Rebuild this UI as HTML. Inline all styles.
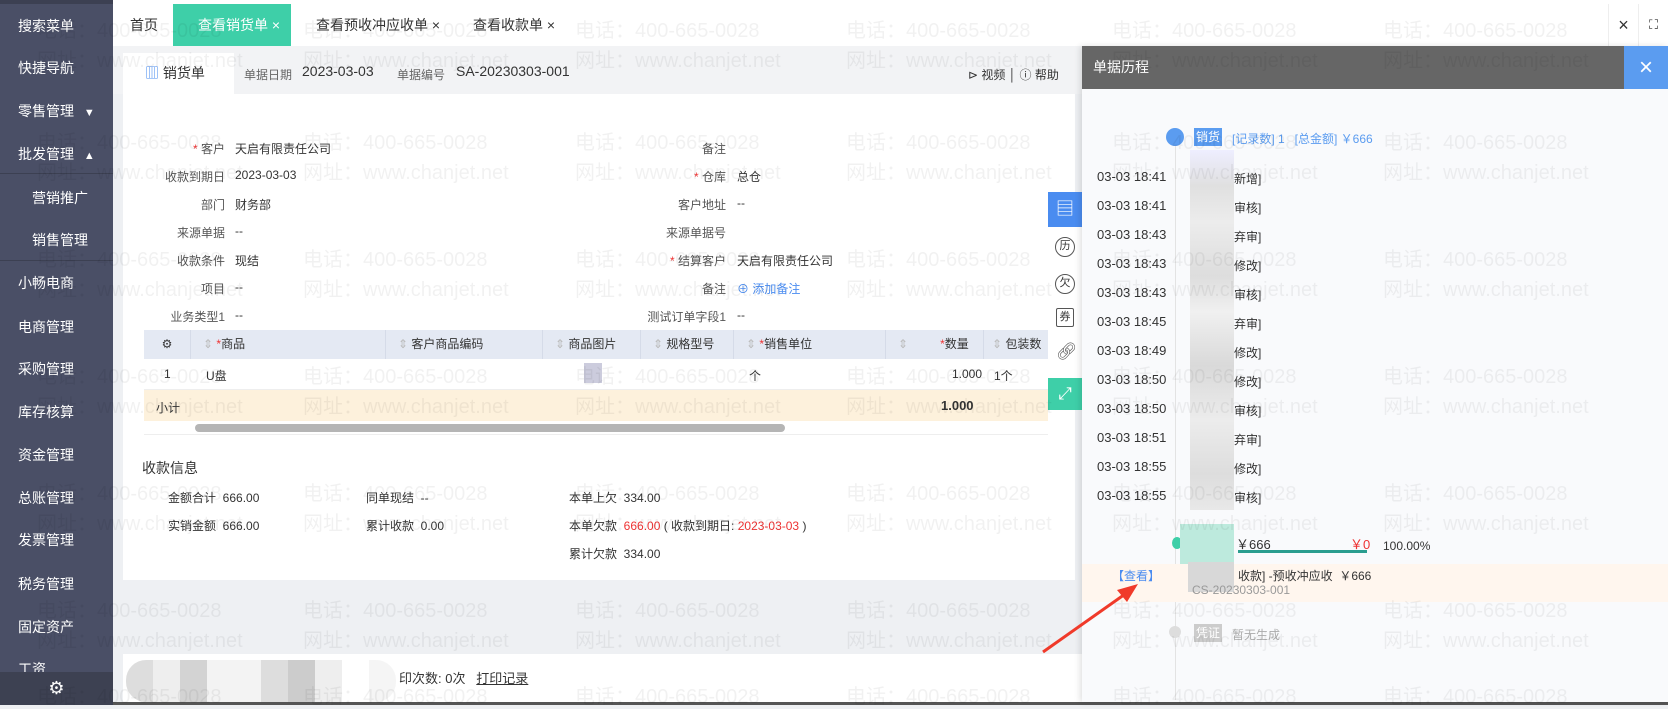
<!DOCTYPE html>
<html><head><meta charset="utf-8"><style>
*{margin:0;padding:0;box-sizing:border-box}
body{width:1668px;height:705px;overflow:hidden;position:relative;background:#eef0f3;font-family:"Liberation Sans","Noto Sans CJK SC",sans-serif;font-size:12px;color:#333}
.a{position:absolute;white-space:nowrap}
#side{left:0;top:0;width:113px;height:705px;background:#4a4f66}
#side .it{position:absolute;left:18px;color:#fff;font-size:14px}
#side .sub{left:32px}
.lbl{color:#555;text-align:right;width:120px}
.wm{position:absolute;color:rgba(0,0,0,0.055);font-size:20px;white-space:nowrap;pointer-events:none;z-index:50;font-family:"Liberation Sans Narrow","Liberation Sans","Noto Sans CJK SC",sans-serif}
.th{position:absolute;top:0;height:29px;line-height:29px;border-right:1px solid #d5dbe8;font-size:12px;color:#333}
.blur{position:absolute;background:#ddd}
.t{position:absolute;left:1097px;font-size:13px;color:#333}
</style></head><body>
<div id="side" class="a">
<div style="position:absolute;top:0;left:0;width:113px;height:4px;background:#3c4052"></div>
<div class="it" style="top:16px">搜索菜单</div>
<div class="it" style="top:58px">快捷导航</div>
<div class="it" style="top:101px">零售管理 <span style="font-size:11px;margin-left:6px">▼</span></div>
<div class="it" style="top:144px">批发管理 <span style="font-size:11px;margin-left:6px">▲</span></div>
<div style="position:absolute;top:173px;left:0;width:113px;height:1px;background:#3c4052"></div>
<div class="it sub" style="top:188px">营销推广</div>
<div class="it sub" style="top:230px">销售管理</div>
<div style="position:absolute;top:260px;left:0;width:113px;height:1px;background:#3c4052"></div>
<div class="it" style="top:273px">小畅电商</div>
<div class="it" style="top:317px">电商管理</div>
<div class="it" style="top:359px">采购管理</div>
<div class="it" style="top:402px">库存核算</div>
<div class="it" style="top:445px">资金管理</div>
<div class="it" style="top:488px">总账管理</div>
<div class="it" style="top:530px">发票管理</div>
<div class="it" style="top:574px">税务管理</div>
<div class="it" style="top:617px">固定资产</div>
<div class="it" style="top:659px">工资</div>
<div style="position:absolute;top:672px;left:0;width:113px;height:33px;background:#3d4152;color:#fff;text-align:center;font-size:18px;line-height:33px">⚙</div>
</div>
<div class="a" style="left:113px;top:0;width:1555px;height:46px;background:#fff"></div>
<div class="a" style="left:130px;top:15px;font-size:14px">首页</div>
<div class="a" style="left:173px;top:4px;width:118px;height:42px;background:#3ecfa8;color:#fff;font-size:14px;line-height:42px;padding-left:25px">查看销货单 ×</div>
<div class="a" style="left:316px;top:15px;font-size:14px">查看预收冲应收单 ×</div>
<div class="a" style="left:473px;top:15px;font-size:14px">查看收款单 ×</div>
<div class="a" style="left:1608px;top:4px;width:30px;height:42px;background:#fff;border-left:1px solid #eee;font-size:18px;text-align:center;line-height:42px">×</div>
<div class="a" style="left:1638px;top:4px;width:30px;height:42px;background:#fff;border-left:1px solid #eee;font-size:13px;text-align:center;line-height:42px">⛶</div>
<div class="a" style="left:113px;top:46px;width:970px;height:48px;background:#f2f3f5"></div>
<div class="a" style="left:123px;top:53px;width:111px;height:41px;background:#fff;font-size:14px;line-height:41px;padding-left:22px"><span style="color:#4a8cf0">▥</span> 销货单</div>
<div class="a" style="left:244px;top:66px;color:#666">单据日期</div>
<div class="a" style="left:302px;top:63px;font-size:14px">2023-03-03</div>
<div class="a" style="left:397px;top:66px;color:#666">单据编号</div>
<div class="a" style="left:456px;top:63px;font-size:14px">SA-20230303-001</div>
<div class="a" style="left:968px;top:66px;font-size:12px">⊳ 视频 │ ⓘ 帮助</div>
<div class="a" style="left:123px;top:94px;width:952px;height:486px;background:#fff"></div>
<div class="a lbl" style="left:105px;top:140px"><span style="color:#e33">* </span>客户</div><div class="a" style="left:235px;top:140px">天启有限责任公司</div>
<div class="a lbl" style="left:105px;top:168px">收款到期日</div><div class="a" style="left:235px;top:168px">2023-03-03</div>
<div class="a lbl" style="left:105px;top:196px">部门</div><div class="a" style="left:235px;top:196px">财务部</div>
<div class="a lbl" style="left:105px;top:224px">来源单据</div><div class="a" style="left:235px;top:224px">--</div>
<div class="a lbl" style="left:105px;top:252px">收款条件</div><div class="a" style="left:235px;top:252px">现结</div>
<div class="a lbl" style="left:105px;top:280px">项目</div><div class="a" style="left:235px;top:280px">--</div>
<div class="a lbl" style="left:105px;top:308px">业务类型1</div><div class="a" style="left:235px;top:308px">--</div>
<div class="a lbl" style="left:606px;top:140px">备注</div>
<div class="a lbl" style="left:606px;top:168px"><span style="color:#e33">* </span>仓库</div><div class="a" style="left:737px;top:168px">总仓</div>
<div class="a lbl" style="left:606px;top:196px">客户地址</div><div class="a" style="left:737px;top:196px">--</div>
<div class="a lbl" style="left:606px;top:224px">来源单据号</div>
<div class="a lbl" style="left:606px;top:252px"><span style="color:#e33">* </span>结算客户</div><div class="a" style="left:737px;top:252px">天启有限责任公司</div>
<div class="a lbl" style="left:606px;top:280px">备注</div><div class="a" style="left:737px;top:280px;color:#4a8cf0">⊕ 添加备注</div>
<div class="a lbl" style="left:606px;top:308px">测试订单字段1</div><div class="a" style="left:737px;top:308px">--</div>
<div class="a" style="left:144px;top:330px;width:904px;height:29px;background:#e4e9f3">
<div class="th" style="left:0;width:47px;text-align:center">⚙</div>
<div class="th" style="left:47px;width:195px;padding-left:12px"><span style="color:#bbb">⇕</span> <span style="color:#e33">*</span>商品</div>
<div class="th" style="left:242px;width:157px;padding-left:12px"><span style="color:#bbb">⇕</span> 客户商品编码</div>
<div class="th" style="left:399px;width:98px;padding-left:12px"><span style="color:#bbb">⇕</span> 商品图片</div>
<div class="th" style="left:497px;width:93px;padding-left:12px"><span style="color:#bbb">⇕</span> 规格型号</div>
<div class="th" style="left:590px;width:152px;padding-left:12px"><span style="color:#bbb">⇕</span> <span style="color:#e33">*</span>销售单位</div>
<div class="th" style="left:742px;width:98px;padding-left:12px"><span style="color:#bbb;margin-right:32px">⇕</span><span style="color:#e33">*</span>数量</div>
<div class="th" style="left:840px;width:64px;padding-left:8px;border:none"><span style="color:#bbb">⇕</span> 包装数</div>
</div>
<div class="a" style="left:144px;top:359px;width:904px;height:31px;border-bottom:1px solid #eee">
<div class="a" style="left:20px;top:8px">1</div><div class="a" style="left:62px;top:8px">U盘</div>
<div class="a" style="left:440px;top:4px;width:18px;height:20px;background:#ccd"></div>
<div class="a" style="left:605px;top:8px">个</div><div class="a" style="left:808px;top:8px">1.000</div><div class="a" style="left:850px;top:8px">1个</div>
</div>
<div class="a" style="left:144px;top:390px;width:904px;height:31px;background:#fdf1dc"><div class="a" style="left:12px;top:9px">小计</div><div class="a" style="left:797px;top:8px;font-weight:bold;font-size:13px">1.000</div></div>
<div class="a" style="left:195px;top:424px;width:590px;height:8px;border-radius:4px;background:#b5b5b5"></div>
<div class="a" style="left:144px;top:434px;width:904px;height:1px;background:#eee"></div>
<div class="a" style="left:142px;top:458px;font-size:14px">收款信息</div>
<div class="a" style="left:168px;top:489px">金额合计 &nbsp;666.00</div>
<div class="a" style="left:168px;top:517px">实销金额 &nbsp;666.00</div>
<div class="a" style="left:366px;top:489px">同单现结 &nbsp;--</div>
<div class="a" style="left:366px;top:517px">累计收款 &nbsp;0.00</div>
<div class="a" style="left:569px;top:489px">本单上欠 &nbsp;334.00</div>
<div class="a" style="left:569px;top:517px">本单欠款 &nbsp;<span style="color:#e33">666.00</span> ( 收款到期日: <span style="color:#e33">2023-03-03</span> )</div>
<div class="a" style="left:569px;top:545px">累计欠款 &nbsp;334.00</div>
<div class="a" style="left:123px;top:654px;width:960px;height:48px;background:#fff"></div>
<div class="a" style="left:126px;top:660px;width:270px;height:42px;border-radius:20px;background:linear-gradient(90deg,#ddd 0 10%,#eee 10% 20%,#d3d3d3 20% 30%,#f3f3f3 30% 50%,#ddd 50% 60%,#ccc 60% 70%,#eee 70% 80%,#fff 80% 90%,#f5f5f5 90%)"></div>
<div class="a" style="left:399px;top:668px;font-size:13px">印次数: 0次 &nbsp;&nbsp;<span style="text-decoration:underline">打印记录</span></div>
<div class="a" style="left:113px;top:702px;width:1555px;height:3px;background:#555"></div>
<div class="a" style="left:1048px;top:192px;width:34px;height:218px;background:#fff"></div>
<div class="a" style="left:1048px;top:192px;width:34px;height:35px;background:#4a8cf0;color:#fff;font-size:18px;text-align:center;line-height:35px">▤</div>
<div class="a" style="left:1055px;top:237px;width:20px;height:20px;border:1.5px solid #555;border-radius:50%;font-size:11px;text-align:center;line-height:17px">历</div>
<div class="a" style="left:1055px;top:274px;width:20px;height:20px;border:1.5px solid #555;border-radius:50%;font-size:11px;text-align:center;line-height:17px">欠</div>
<div class="a" style="left:1056px;top:308px;width:18px;height:19px;border:1.5px solid #555;border-radius:2px;font-size:11px;text-align:center;line-height:16px">券</div>
<div class="a" style="left:1056px;top:342px;font-size:17px;color:#555">🔗︎</div>
<div class="a" style="left:1048px;top:378px;width:34px;height:32px;background:#3ecfa8;color:#fff;font-size:17px;text-align:center;line-height:32px">⤢</div>
<div class="a" style="left:1082px;top:46px;width:586px;height:656px;background:#f9fafc;box-shadow:-2px 0 6px rgba(0,0,0,.12)"></div>
<div class="a" style="left:1082px;top:46px;width:542px;height:43px;background:#666;color:#fff;font-size:14px;line-height:43px;padding-left:11px">单据历程</div>
<div class="a" style="left:1624px;top:46px;width:44px;height:43px;background:#5b9cf0;color:#fff;font-size:24px;text-align:center;line-height:43px">×</div>
<div class="a" style="left:1175px;top:140px;width:1px;height:560px;background:#e3e3e3"></div>
<div class="a" style="left:1166px;top:128px;width:18px;height:18px;border-radius:50%;background:#5b9cf0"></div>
<div class="a" style="left:1194px;top:128px;width:28px;height:18px;background:#5b9cf0;color:#fff;text-align:center;line-height:18px">销货</div>
<div class="a" style="left:1232px;top:130px;color:#5b9cf0">[记录数] 1 &nbsp;&nbsp;[总金额] ￥666</div>
<div class="blur" style="left:1190px;top:150px;width:44px;height:360px;background:linear-gradient(180deg,#eef 0,#e0e0e0 10%,#ececec 20%,#ddd 35%,#f0f0f0 45%,#d9d9d9 60%,#ececec 75%,#ddd 90%,#e8e8e8)"></div>
<div class="t" style="top:169px">03-03 18:41</div><div class="a" style="left:1234px;top:170px">新增]</div>
<div class="t" style="top:198px">03-03 18:41</div><div class="a" style="left:1234px;top:199px">审核]</div>
<div class="t" style="top:227px">03-03 18:43</div><div class="a" style="left:1234px;top:228px">弃审]</div>
<div class="t" style="top:256px">03-03 18:43</div><div class="a" style="left:1234px;top:257px">修改]</div>
<div class="t" style="top:285px">03-03 18:43</div><div class="a" style="left:1234px;top:286px">审核]</div>
<div class="t" style="top:314px">03-03 18:45</div><div class="a" style="left:1234px;top:315px">弃审]</div>
<div class="t" style="top:343px">03-03 18:49</div><div class="a" style="left:1234px;top:344px">修改]</div>
<div class="t" style="top:372px">03-03 18:50</div><div class="a" style="left:1234px;top:373px">修改]</div>
<div class="t" style="top:401px">03-03 18:50</div><div class="a" style="left:1234px;top:402px">审核]</div>
<div class="t" style="top:430px">03-03 18:51</div><div class="a" style="left:1234px;top:431px">弃审]</div>
<div class="t" style="top:459px">03-03 18:55</div><div class="a" style="left:1234px;top:460px">修改]</div>
<div class="t" style="top:488px">03-03 18:55</div><div class="a" style="left:1234px;top:489px">审核]</div>
<div class="a" style="left:1172px;top:537px;width:10px;height:12px;border-radius:50%;background:#3ecfa8"></div>
<div class="blur" style="left:1180px;top:524px;width:54px;height:40px;background:#bdeadd"></div>
<div class="a" style="left:1236px;top:534px;font-size:13px">￥666</div>
<div class="a" style="left:1350px;top:534px;font-size:13px;color:#e33">￥0</div>
<div class="a" style="left:1238px;top:550px;width:129px;height:3px;background:#2a9d8f"></div>
<div class="a" style="left:1383px;top:539px">100.00%</div>
<div class="a" style="left:1082px;top:564px;width:586px;height:38px;background:#fff6ee"></div>
<div class="blur" style="left:1188px;top:562px;width:46px;height:30px;background:#d8d8d8"></div>
<div class="a" style="left:1112px;top:567px;color:#4a8cf0">【查看】</div>
<div class="a" style="left:1238px;top:567px">收款] -预收冲应收 &nbsp;￥666</div>
<div class="a" style="left:1192px;top:583px;color:#999">CS-20230303-001</div>
<div class="a" style="left:1169px;top:626px;width:12px;height:12px;border-radius:50%;background:#ddd"></div>
<div class="a" style="left:1194px;top:624px;width:28px;height:18px;background:#ccc;color:#fff;text-align:center;line-height:18px">凭证</div>
<div class="a" style="left:1232px;top:626px;color:#aaa">暂无生成</div>
<svg class="a" style="left:0;top:0;z-index:60" width="1668" height="705"><line x1="1043" y1="652" x2="1128" y2="592" stroke="#f03a2a" stroke-width="3"/><polygon points="1138,584 1117,590 1127,602" fill="#f03a2a"/></svg>
<div class="wm" style="left:37px;top:14px">电话：400-665-0028</div><div class="wm" style="left:37px;top:44px">网址：www.chanjet.net</div>
<div class="wm" style="left:303px;top:14px">电话：400-665-0028</div><div class="wm" style="left:303px;top:44px">网址：www.chanjet.net</div>
<div class="wm" style="left:575px;top:14px">电话：400-665-0028</div><div class="wm" style="left:575px;top:44px">网址：www.chanjet.net</div>
<div class="wm" style="left:846px;top:14px">电话：400-665-0028</div><div class="wm" style="left:846px;top:44px">网址：www.chanjet.net</div>
<div class="wm" style="left:1112px;top:14px">电话：400-665-0028</div><div class="wm" style="left:1112px;top:44px">网址：www.chanjet.net</div>
<div class="wm" style="left:1383px;top:14px">电话：400-665-0028</div><div class="wm" style="left:1383px;top:44px">网址：www.chanjet.net</div>
<div class="wm" style="left:37px;top:126px">电话：400-665-0028</div><div class="wm" style="left:37px;top:156px">网址：www.chanjet.net</div>
<div class="wm" style="left:303px;top:126px">电话：400-665-0028</div><div class="wm" style="left:303px;top:156px">网址：www.chanjet.net</div>
<div class="wm" style="left:575px;top:126px">电话：400-665-0028</div><div class="wm" style="left:575px;top:156px">网址：www.chanjet.net</div>
<div class="wm" style="left:846px;top:126px">电话：400-665-0028</div><div class="wm" style="left:846px;top:156px">网址：www.chanjet.net</div>
<div class="wm" style="left:1112px;top:126px">电话：400-665-0028</div><div class="wm" style="left:1112px;top:156px">网址：www.chanjet.net</div>
<div class="wm" style="left:1383px;top:126px">电话：400-665-0028</div><div class="wm" style="left:1383px;top:156px">网址：www.chanjet.net</div>
<div class="wm" style="left:37px;top:243px">电话：400-665-0028</div><div class="wm" style="left:37px;top:273px">网址：www.chanjet.net</div>
<div class="wm" style="left:303px;top:243px">电话：400-665-0028</div><div class="wm" style="left:303px;top:273px">网址：www.chanjet.net</div>
<div class="wm" style="left:575px;top:243px">电话：400-665-0028</div><div class="wm" style="left:575px;top:273px">网址：www.chanjet.net</div>
<div class="wm" style="left:846px;top:243px">电话：400-665-0028</div><div class="wm" style="left:846px;top:273px">网址：www.chanjet.net</div>
<div class="wm" style="left:1112px;top:243px">电话：400-665-0028</div><div class="wm" style="left:1112px;top:273px">网址：www.chanjet.net</div>
<div class="wm" style="left:1383px;top:243px">电话：400-665-0028</div><div class="wm" style="left:1383px;top:273px">网址：www.chanjet.net</div>
<div class="wm" style="left:37px;top:360px">电话：400-665-0028</div><div class="wm" style="left:37px;top:390px">网址：www.chanjet.net</div>
<div class="wm" style="left:303px;top:360px">电话：400-665-0028</div><div class="wm" style="left:303px;top:390px">网址：www.chanjet.net</div>
<div class="wm" style="left:575px;top:360px">电话：400-665-0028</div><div class="wm" style="left:575px;top:390px">网址：www.chanjet.net</div>
<div class="wm" style="left:846px;top:360px">电话：400-665-0028</div><div class="wm" style="left:846px;top:390px">网址：www.chanjet.net</div>
<div class="wm" style="left:1112px;top:360px">电话：400-665-0028</div><div class="wm" style="left:1112px;top:390px">网址：www.chanjet.net</div>
<div class="wm" style="left:1383px;top:360px">电话：400-665-0028</div><div class="wm" style="left:1383px;top:390px">网址：www.chanjet.net</div>
<div class="wm" style="left:37px;top:477px">电话：400-665-0028</div><div class="wm" style="left:37px;top:507px">网址：www.chanjet.net</div>
<div class="wm" style="left:303px;top:477px">电话：400-665-0028</div><div class="wm" style="left:303px;top:507px">网址：www.chanjet.net</div>
<div class="wm" style="left:575px;top:477px">电话：400-665-0028</div><div class="wm" style="left:575px;top:507px">网址：www.chanjet.net</div>
<div class="wm" style="left:846px;top:477px">电话：400-665-0028</div><div class="wm" style="left:846px;top:507px">网址：www.chanjet.net</div>
<div class="wm" style="left:1112px;top:477px">电话：400-665-0028</div><div class="wm" style="left:1112px;top:507px">网址：www.chanjet.net</div>
<div class="wm" style="left:1383px;top:477px">电话：400-665-0028</div><div class="wm" style="left:1383px;top:507px">网址：www.chanjet.net</div>
<div class="wm" style="left:37px;top:594px">电话：400-665-0028</div><div class="wm" style="left:37px;top:624px">网址：www.chanjet.net</div>
<div class="wm" style="left:303px;top:594px">电话：400-665-0028</div><div class="wm" style="left:303px;top:624px">网址：www.chanjet.net</div>
<div class="wm" style="left:575px;top:594px">电话：400-665-0028</div><div class="wm" style="left:575px;top:624px">网址：www.chanjet.net</div>
<div class="wm" style="left:846px;top:594px">电话：400-665-0028</div><div class="wm" style="left:846px;top:624px">网址：www.chanjet.net</div>
<div class="wm" style="left:1112px;top:594px">电话：400-665-0028</div><div class="wm" style="left:1112px;top:624px">网址：www.chanjet.net</div>
<div class="wm" style="left:1383px;top:594px">电话：400-665-0028</div><div class="wm" style="left:1383px;top:624px">网址：www.chanjet.net</div>
<div class="wm" style="left:37px;top:680px">电话：400-665-0028</div>
<div class="wm" style="left:303px;top:680px">电话：400-665-0028</div>
<div class="wm" style="left:575px;top:680px">电话：400-665-0028</div>
<div class="wm" style="left:846px;top:680px">电话：400-665-0028</div>
<div class="wm" style="left:1112px;top:680px">电话：400-665-0028</div>
<div class="wm" style="left:1383px;top:680px">电话：400-665-0028</div>
</body></html>
